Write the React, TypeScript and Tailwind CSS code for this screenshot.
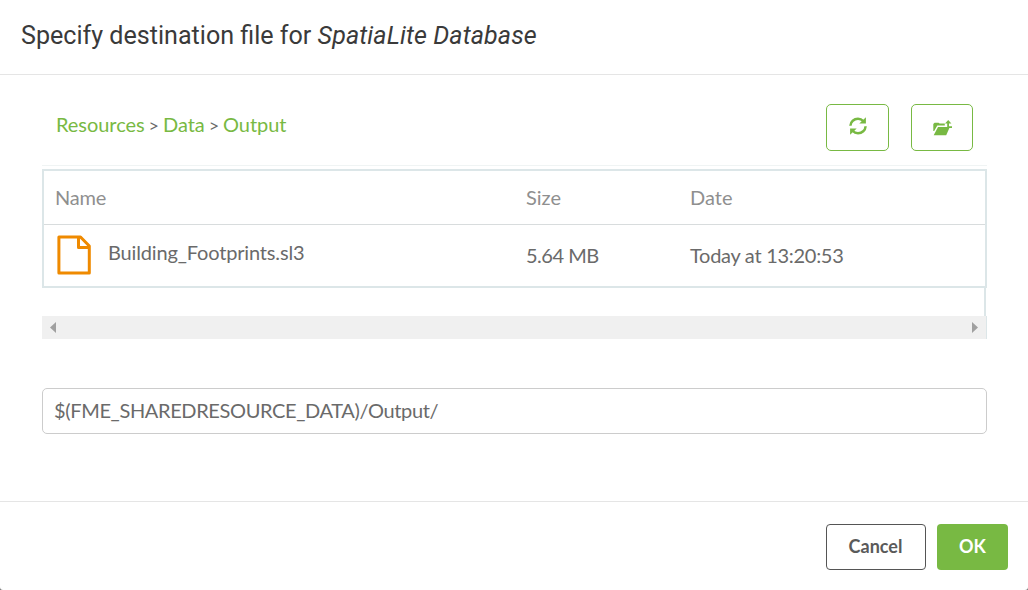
import React from "react";

const crumbs = ["Resources", "Data", "Output"];

function RefreshIcon() {
  return (
    <svg width="18" height="18" viewBox="0 0 18 18" fill="none" aria-hidden="true">
      <path d="M1.4 8.8C1.6 4.6 5 1.8 9 1.8C11 1.8 12.9 2.6 14.2 4M16.6 9.2C16.400 13.4 13 16.2 9 16.2C7 16.2 5.100 15.400 3.800 14" stroke="#78b943" strokeWidth="2.5" />
      <path d="M16.9 0.2V6.4H10.3ZM1.1 17.8V11.6H7.7Z" fill="#78b943" />
    </svg>
  );
}

function FolderUpIcon() {
  return (
    <svg width="19" height="16" viewBox="0 0 19 16" fill="#78b943" aria-hidden="true">
      <path d="M0.3 11V4.1L1.6 2.800H5.6L6.6 3.6H11.8V5.6H4.3L1.2 11Z" />
      <path d="M5 6.9H16.8L13.2 15.2H0.7Z" />
      <path d="M15.2 0L18.4 3.4H16V6.200H19V8H14.2V3.4H12Z" />
    </svg>
  );
}

function FileIcon() {
  return (
    <svg width="34" height="40" viewBox="0 0 34 40" fill="none" stroke="#ef8a00" strokeWidth="3" strokeLinejoin="round" aria-hidden="true">
      <path d="M1.9 2H23.500L32.3 11V38H1.9Z" />
      <path d="M21.5 2V12.6H32" />
    </svg>
  );
}

export default function App() {
  return (
    <div className="h-[590px] w-[1028px] overflow-hidden bg-[#777777] font-['Lato','Liberation_Sans',sans-serif] text-[20px] leading-6 text-[#6a6a6a]">
      <div className="flex h-full flex-col rounded-b-[3px] bg-white">
        <header className="h-[75px] shrink-0 border-b border-[#e5e5e5] pl-[21px] pt-5 font-['Roboto',sans-serif] text-[25.1px] leading-[31px] text-[#3a3a3a]">
          <h1 className="whitespace-nowrap">
            Specify destination file for <em className="tracking-[0.1px]">SpatiaLite Database</em>
          </h1>
        </header>

        <main className="flex h-[427px] shrink-0 flex-col border-b border-[#e5e5e5] pl-[42px] pr-[41px] pt-[29px]">
          <div className="flex h-[62px] items-start justify-between border-b border-[#f0f4f4] pl-3.5 pr-3.5">
            <nav className="flex gap-1 pt-2 tracking-[-0.05px]">
              {crumbs.map((crumb, i) => (
                <React.Fragment key={crumb}>
                  {i > 0 && <span className="pt-px text-[18px]">&gt;</span>}
                  <a className="text-[#78b943]">{crumb}</a>
                </React.Fragment>
              ))}
            </nav>
            <div className="flex gap-[22px]">
              <button aria-label="Refresh" className="flex h-[47px] w-[63px] items-center justify-center rounded-[5px] border border-[#78b943] pb-[3px]">
                <RefreshIcon />
              </button>
              <button aria-label="Up one folder" className="flex h-[47px] w-[62px] items-center justify-center rounded-[5px] border border-[#78b943]">
                <FolderUpIcon />
              </button>
            </div>
          </div>

          <div className="mt-[3px] h-[119px] border-2 border-[#dce6e8]">
            <div className="grid h-[54px] grid-cols-[471px_164px_1fr] items-center border-b border-[#d8dcdd] pb-0.5 pl-[11px] text-[#8f8f8f]">
              <span className="tracking-[-0.2px]">Name</span>
              <span>Size</span>
              <span>Date</span>
            </div>
            <div className="grid h-[61px] grid-cols-[471px_164px_1fr] items-center pb-0.5 pl-[11px]">
              <div className="flex items-center gap-[17px] pl-0.5">
                <FileIcon />
                <span className="pb-[5px] tracking-[-0.16px]">Building_Footprints.sl3</span>
              </div>
              <span className="tracking-[-0.5px]">5.64 MB</span>
              <span className="tracking-[-0.28px]">Today at 13:20:53</span>
            </div>
          </div>
          <div className="mr-px h-7 border-r-2 border-[#dce6e8]" />
          <div className="flex h-[23px] items-center justify-between border-r border-[#dce6e8] bg-[#f0f0f0] pl-2 pr-2">
            <svg width="6" height="11" viewBox="0 0 6 11" fill="#a0a0a0" aria-hidden="true"><path d="M6 0V11L0 5.5Z" /></svg>
            <svg width="6" height="11" viewBox="0 0 6 11" fill="#a0a0a0" aria-hidden="true"><path d="M0 0V11L6 5.500Z" /></svg>
          </div>

          <input
            aria-label="Destination"
            className="mt-[49px] h-[46px] w-full rounded-[5px] border border-[#cccccc] pb-0.5 pl-[11px] tracking-[-0.36px] text-[#6a6a6a] outline-none"
            defaultValue="$(FME_SHAREDRESOURCE_DATA)/Output/"
          />
        </main>

        <footer className="flex justify-end gap-[11px] pr-5 pt-[22px] text-[18px] font-bold">
          <button className="h-[46px] w-[100px] rounded-[4px] border border-[#555555] pb-0.5 pr-px text-[#5a5a5a]">Cancel</button>
          <button className="h-[46px] w-[71px] rounded-[4px] bg-[#78b943] pb-0.5 text-white">OK</button>
        </footer>
      </div>
    </div>
  );
}
